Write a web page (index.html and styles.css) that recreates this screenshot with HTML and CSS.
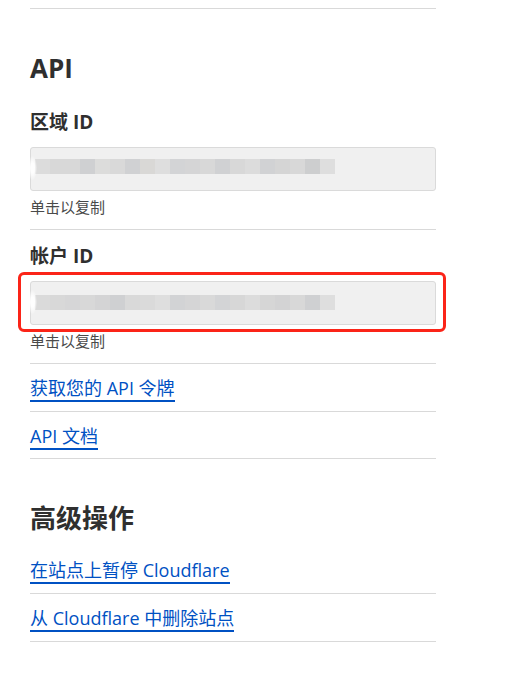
FILE: index.html
```html
<!DOCTYPE html>
<html lang="zh-CN">
<head>
<meta charset="utf-8">
<title>API</title>
<link rel="stylesheet" href="styles.css">
</head>
<body>
<main class="page">
  <div class="prev-row"></div>

  <section class="section">
    <h2 class="section-title">API</h2>

    <div class="field">
      <h3 class="field-label">区域 ID</h3>
      <div class="copy-box">
        <div class="masked masked-a"></div>
      </div>
      <div class="hint">单击以复制</div>
    </div>

    <div class="field">
      <h3 class="field-label">帐户 ID</h3>
      <div class="copy-box highlighted">
        <div class="masked masked-b"></div>
      </div>
      <div class="hint">单击以复制</div>
    </div>

    <div class="link-row"><a class="link" href="#">获取您的 API 令牌</a></div>
    <div class="link-row last"><a class="link" href="#">API 文档</a></div>
  </section>

  <section class="section">
    <h2 class="section-title">高级操作</h2>
    <div class="link-row"><a class="link" href="#">在站点上暂停 Cloudflare</a></div>
    <div class="link-row"><a class="link" href="#">从 Cloudflare 中删除站点</a></div>
  </section>
</main>
</body>
</html>
```

FILE: styles.css
```css
* { box-sizing: border-box; }

html, body {
  margin: 0;
  padding: 0;
  background: #ffffff;
}

body {
  font-family: "Open Sans", "Noto Sans CJK SC", sans-serif;
  color: #313131;
}

.page {
  width: 406px;
  margin-left: 30px;
}

.prev-row {
  height: 9px;
  border-bottom: 1px solid #d9d9d9;
}

.section-title {
  margin: 43px 0 12px;
  font-size: 26px;
  line-height: 32px;
  font-weight: 700;
  color: #2f2f2f;
}

.field {
  padding: 14px 0 12px;
  border-bottom: 1px solid #d9d9d9;
  display: flex;
  flex-direction: column;
}

.field-label {
  margin: 0 0 13px;
  font-size: 19px;
  line-height: 24px;
  font-weight: 700;
  color: #2f2f2f;
}

.copy-box {
  position: relative;
  height: 44px;
  background: #f0f0f0;
  border: 1px solid #dadada;
  border-radius: 3px;
  padding: 11px 0 0 4px;
}

.copy-box::before {
  content: "";
  position: absolute;
  left: -3px;
  top: 8px;
  width: 9px;
  height: 24px;
  border-radius: 50%;
  background: radial-gradient(ellipse at center, rgba(255,255,255,0.95) 30%, rgba(255,255,255,0) 75%);
}

.highlighted::after {
  content: "";
  position: absolute;
  left: -13px;
  right: -11px;
  top: -10px;
  bottom: -8px;
  border: 3px solid #fb2418;
  border-radius: 6px;
}

.masked {
  width: 300px;
  height: 15px;
}

.masked-a {
  background: linear-gradient(to right,
    #dcdcdc 0 15px, #d8d8d8 15px 45px, #cfd0d2 45px 60px, #dcdcdb 60px 75px,
    #d9d9d9 75px 90px, #d0d1d3 90px 105px, #d9d8d6 105px 120px, #dedede 120px 135px,
    #d3d4d6 135px 150px, #d5d5d6 150px 165px, #d8d8d8 165px 180px, #d0d1d3 180px 195px,
    #d8d8d8 195px 210px, #dcdcdc 210px 225px, #d1d2d4 225px 240px, #d5d5d5 240px 255px,
    #d8d8d8 255px 270px, #cdcecf 270px 285px, #dedede 285px 300px);
}

.masked-b {
  margin-top: 2px;
  background: linear-gradient(to right,
    #dadada 0 15px, #d8d8d8 15px 30px, #d6d6d7 30px 45px, #d8d8d8 45px 60px,
    #d4d4d5 60px 75px, #cfd0d2 75px 90px, #d9d9d9 90px 105px, #dadada 105px 120px,
    #dedede 120px 135px, #d2d3d5 135px 150px, #d5d5d6 150px 165px, #d9d9d9 165px 180px,
    #d3d4d6 180px 195px, #d7d7d7 195px 210px, #dcdcdc 210px 225px, #d6d6d6 225px 240px,
    #d3d3d4 240px 255px, #d8d8d8 255px 270px, #cfd0d2 270px 285px, #dedede 285px 300px);
}

.hint {
  margin-top: 6px;
  font-size: 15px;
  line-height: 20px;
  color: #4a4a4a;
}

.link-row {
  padding: 12px 0 9px;
  border-bottom: 1px solid #d9d9d9;
}

.link-row.last {
  padding-bottom: 8px;
}

.link {
  display: inline-block;
  font-size: 18px;
  line-height: 24px;
  color: #0051c3;
  text-decoration: none;
  border-bottom: 2px solid #0051c3;
}
```
